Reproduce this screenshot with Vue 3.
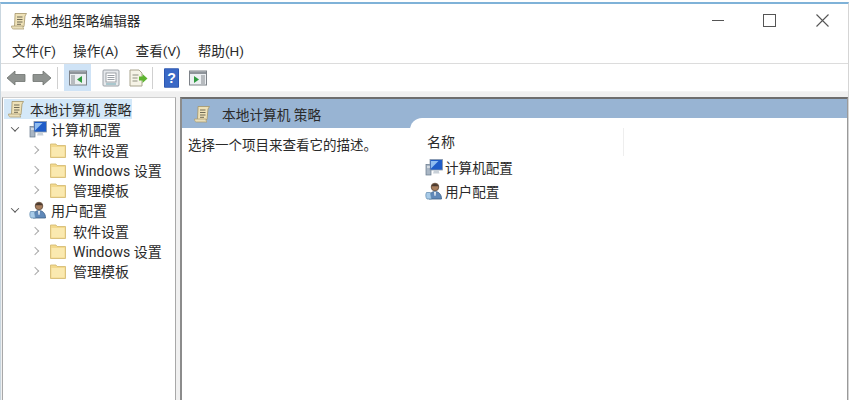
<script setup>
const tree = [
  { label: '本地计算机 策略', icon: 'scroll', level: 0, selected: true },
  { label: '计算机配置', icon: 'computer', level: 1, caret: 'down' },
  { label: '软件设置', icon: 'folder', level: 2, caret: 'right' },
  { label: 'Windows 设置', icon: 'folder', level: 2, caret: 'right' },
  { label: '管理模板', icon: 'folder', level: 2, caret: 'right' },
  { label: '用户配置', icon: 'user', level: 1, caret: 'down' },
  { label: '软件设置', icon: 'folder', level: 2, caret: 'right' },
  { label: 'Windows 设置', icon: 'folder', level: 2, caret: 'right' },
  { label: '管理模板', icon: 'folder', level: 2, caret: 'right' }
]
const menus = ['文件(F)', '操作(A)', '查看(V)', '帮助(H)']
</script>

<template>
  <div class="window">
    <svg class="defs" width="0" height="0" aria-hidden="true">
      <defs>
        <symbol id="scroll" viewBox="0 0 18 18">
          <path d="M5 1.500h11.500l-1.500 2.500-1 10.500H4.500L5 4z" fill="#efe2b8" stroke="#a39468" stroke-width=".8"/>
          <path d="M1.500 14h11.500c0 1.500.3 2.500 1 3H3.500c-1.200 0-2-1.200-2-3z" fill="#eadfba" stroke="#ad9f76" stroke-width=".8"/>
          <path d="M7 5h5.500M7 7.500h5.500M7 10h5.500M7 12.300h4" stroke="#6f6a55" stroke-width="1"/>
        </symbol>
        <symbol id="computer" viewBox="0 0 18 18">
          <rect x="1" y="6.500" width="5" height="10.500" fill="#a9b6c4" stroke="#66788c" stroke-width=".7"/>
          <rect x="5" y="1.500" width="12.500" height="10.500" fill="#1f5cc8" stroke="#8a98a8" stroke-width=".8"/>
          <path d="M6 3h7.500L6 10.500z" fill="#8fbcf0"/>
          <path d="M9 12h4.500l1 3.500H8z" fill="#c8d0d8"/>
          <rect x="2" y="8.500" width="3" height="1" fill="#fff"/>
        </symbol>
        <symbol id="user" viewBox="0 0 18 18">
          <circle cx="10" cy="5" r="3.800" fill="#a87f5e" stroke="#5a4636" stroke-width=".8"/>
          <path d="M6.300 4.200c1-3.400 6.400-3.400 7.400 0z" fill="#4b3b30"/>
          <path d="M4 17c0-4.800 2.500-7.500 6-7.500s6.500 2.700 6.500 7.500z" fill="#5f88b8" stroke="#3e5f86" stroke-width=".8"/>
          <path d="M1.500 10.500c-1 1.800-1 4.800.5 6.500h4.500l-1-6.500z" fill="#a8cbe8" stroke="#5b86ae" stroke-width=".7"/>
          <path d="M9 9.800h2l-.4 4h-1.200z" fill="#e8eef4"/>
        </symbol>
        <symbol id="folder" viewBox="0 0 18 18">
          <path d="M1.500 3h5.500l1 1.500h8.500v12h-15z" fill="#f3d98d" stroke="#d6bd77" stroke-width=".9"/>
          <path d="M2.500 6h13v9.500h-13z" fill="#fae9b0"/>
        </symbol>
      </defs>
    </svg>

    <header class="titlebar">
      <svg class="title-icon"><use href="#scroll"/></svg>
      <span class="title-text">本地组策略编辑器</span>
      <div class="controls">
        <span class="ctl min"></span>
        <span class="ctl max"></span>
        <svg class="ctl close" viewBox="0 0 13 13"><path d="M.5.500l12 12M12.500.500l-12 12" stroke="#555" stroke-width="1.100" fill="none"/></svg>
      </div>
    </header>

    <nav class="menubar">
      <span v-for="m in menus" :key="m" class="menu">{{ m }}</span>
    </nav>

    <div class="toolbar">
      <svg class="tb arrow" viewBox="0 0 20 16"><path d="M1 8l8-7v3.500h10v7H9V15z" fill="#8f9390" stroke="#6f7370" stroke-width=".8"/></svg>
      <svg class="tb arrow second" viewBox="0 0 20 16"><path d="M19 8l-8-7v3.500H1v7h10V15z" fill="#8f9390" stroke="#6f7370" stroke-width=".8"/></svg>
      <span class="sep"></span>
      <span class="tb-active">
        <svg class="tb pane" viewBox="0 0 18 16"><rect x=".5" y="1" width="17" height="14" fill="#eceff2" stroke="#7d8288"/><rect x="1" y="1.500" width="16" height="2.500" fill="#8e949a"/><rect x="2" y="5" width="4" height="9" fill="#b7bbbf"/><path d="M13 6v7L8 9.500z" fill="#2f9a3f"/></svg>
      </span>
      <svg class="tb doc" viewBox="0 0 18 18"><rect x="1" y="1" width="16" height="16" rx="1" fill="#e6e9ec" stroke="#9aa0a6"/><rect x="4" y="4" width="10" height="9" fill="#fff" stroke="#8a9096" stroke-width=".8"/><path d="M5.500 6.500h7M5.500 8.500h7M5.500 10.500h7" stroke="#9aa0a6"/><path d="M4 15h10" stroke="#6fa5b0"/></svg>
      <svg class="tb export" viewBox="0 0 20 18"><path d="M2 1h9l3 3v13H2z" fill="#f6f3e6" stroke="#a9a48e"/><path d="M4.500 6h6M4.500 9h5M4.500 12h5" stroke="#8f8f80"/><path d="M11 7.500h3.500V5l5 4.500-5 4.500v-2.500H11z" fill="#5fb531"/></svg>
      <span class="sep second-sep"></span>
      <svg class="tb help" viewBox="0 0 17 22"><rect width="17" height="22" rx="1" fill="#2a55b0"/><rect x="1" y="1" width="15" height="20" fill="#3a69c6"/><text x="8.500" y="17" text-anchor="middle" class="q">?</text></svg>
      <svg class="tb pane2" viewBox="0 0 18 16"><rect x=".5" y="1" width="17" height="14" fill="#eceff2" stroke="#7d8288"/><rect x="1" y="1.500" width="16" height="2.500" fill="#8e949a"/><rect x="12" y="5" width="4" height="9" fill="#b7bbbf"/><path d="M5 6v7l5-3.500z" fill="#2f9a3f"/></svg>
    </div>

    <main class="main">
      <aside class="tree">
        <div v-for="(n, i) in tree" :key="i" class="row" :class="'lv' + n.level">
          <span class="caret" :class="n.caret"></span>
          <span class="node" :class="{ selected: n.selected }">
            <svg class="node-icon" :class="n.icon"><use :href="'#' + n.icon"/></svg>
            <span class="label">{{ n.label }}</span>
          </span>
        </div>
      </aside>

      <section class="detail">
        <div class="band">
          <svg class="band-icon"><use href="#scroll"/></svg>
          <span class="band-title">本地计算机 策略</span>
        </div>
        <div class="body">
          <p class="desc">选择一个项目来查看它的描述。</p>
          <div class="list">
            <div class="list-head"><span class="col">名称</span></div>
            <div class="item"><svg class="item-icon"><use href="#computer"/></svg>计算机配置</div>
            <div class="item"><svg class="item-icon"><use href="#user"/></svg>用户配置</div>
          </div>
        </div>
      </section>
    </main>
  </div>
</template>

<style>
html, body { margin: 0; background: #fff; }
</style>

<style scoped>
.window {
  width: 849px; overflow: hidden; box-sizing: border-box;
  display: flex; flex-direction: column; position: relative;
  font-family: Roboto, "Noto Sans CJK SC", sans-serif;
  font-size: 14px; color: #2a2a2a; background: #fff;
  border-top: 2px solid #7fb2d8; margin-top: 2px; height: 398px;
  border-left: 1px solid #c9d6df; border-right: 1px solid #d5d5d5;
}
.defs { position: absolute; }
.titlebar { height: 33px; display: flex; align-items: center; flex: none; }
.title-icon { width: 18px; height: 18px; margin-left: 9px; }
.title-text { margin-left: 3px; font-size: 13.700px; padding-bottom: 2px; }
.controls { margin-left: auto; display: flex; align-items: center; }
.ctl { display: block; }
.min { width: 12px; height: 1px; background: #555; margin-right: 39px; }
.max { width: 11px; height: 11px; border: 1px solid #555; margin-right: 40px; }
.close { width: 13px; height: 13px; margin-right: 19px; }
.menubar { height: 26px; display: flex; align-items: center; flex: none; padding-left: 11px; gap: 17px; }
.menu { font-size: 13.600px; white-space: nowrap; }
.toolbar {
  height: 28px; flex: none; display: flex; align-items: center; padding-left: 5px;
  border-top: 1px solid #dcdcdc; box-sizing: border-box;
}
.tb { display: block; flex: none; }
.arrow { width: 20px; height: 16px; }
.second { margin-left: 6px; }
.sep { width: 1px; height: 22px; background: #d0d0d0; margin: 0 6px 0 5px; }
.tb-active { width: 27px; height: 27px; background: #cfe3f6; display: flex; align-items: center; justify-content: center; flex: none; }
.pane { width: 18px; height: 16px; }
.doc { width: 18px; height: 18px; margin-left: 11px; }
.export { width: 20px; height: 18px; margin-left: 8px; }
.second-sep { margin: 0 11px 0 4px; }
.help { width: 15px; height: 20px; }
.q { font: bold 16px "Liberation Sans", sans-serif; fill: #fff; }
.pane2 { width: 18px; height: 16px; margin-left: 10px; }
.main {
  flex: 1; display: flex; min-height: 0; background: #f0f0f0; padding-top: 5px; border-top: 1px solid #f4f4f4;
}
.tree {
  width: 174px; flex: none; margin-left: 1px; background: #fff; box-sizing: border-box; padding-top: 1px;
  border: 1px solid #a8a8a8; border-bottom: 0; border-top-color: #cfcfcf; padding-left: 1px;
}
.row { height: 20.250px; display: flex; align-items: center; white-space: nowrap; }
.caret { width: 6px; height: 6px; flex: none; box-sizing: border-box; }
.caret.down { border-right: 1.500px solid #555; border-bottom: 1.500px solid #555; transform: rotate(45deg) translate(-1px, -1px); }
.caret.right { border-right: 1.500px solid #aaa; border-top: 1.500px solid #aaa; transform: rotate(45deg); }
.lv0 .caret { display: none; }
.lv1 .caret { margin-left: 8px; }
.lv2 .caret { margin-left: 28px; }
.node { display: flex; align-items: center; height: 20px; }
.lv1 .node { margin-left: 11px; }
.lv2 .node { margin-left: 11px; }
.node.selected { background: #d4e8f8; padding: 0 1px 0 3px; }
.node-icon { width: 18px; height: 18px; flex: none; margin-right: 4px; }
.selected .node-icon { margin-right: 5px; }
.node-icon.folder { width: 18px; margin-right: 6px; }
.detail { flex: 1; margin-left: 4px; min-width: 0; display: flex; flex-direction: column; border: 1px solid #8c8c8c; border-top: 2px solid #6e6e6e; border-bottom: 0; background: #fff; border-left-width: 2px; border-right-color: #9a9a9a; box-sizing: border-box; }
.band { height: 29px; background: #98b4d3; flex: none; display: flex; align-items: flex-start; padding-top: 6px; box-sizing: border-box; }
.band-icon { width: 18px; height: 18px; margin-left: 11px; }
.band-title { margin-left: 11px; font-size: 13.700px; line-height: 20px; }
.body { flex: 1; display: flex; position: relative; }
.desc { margin: 7px 0 0 6px; width: 222px; flex: none; font-size: 13.500px; line-height: 20px; white-space: nowrap; }
.list { flex: 1; background: #fff; margin-top: -10px; border-top-left-radius: 12px; padding-left: 17px; padding-top: 10px; }
.list-head { height: 27px; display: flex; align-items: center; }
.col { width: 196px; border-right: 1px solid #eeeeee; height: 28px; line-height: 29px; font-size: 14px; }
.item { height: 24px; display: flex; align-items: center; font-size: 13.600px; margin-left: -2px; }
.item-icon { width: 18px; height: 18px; flex: none; margin-right: 2px; }
</style>
